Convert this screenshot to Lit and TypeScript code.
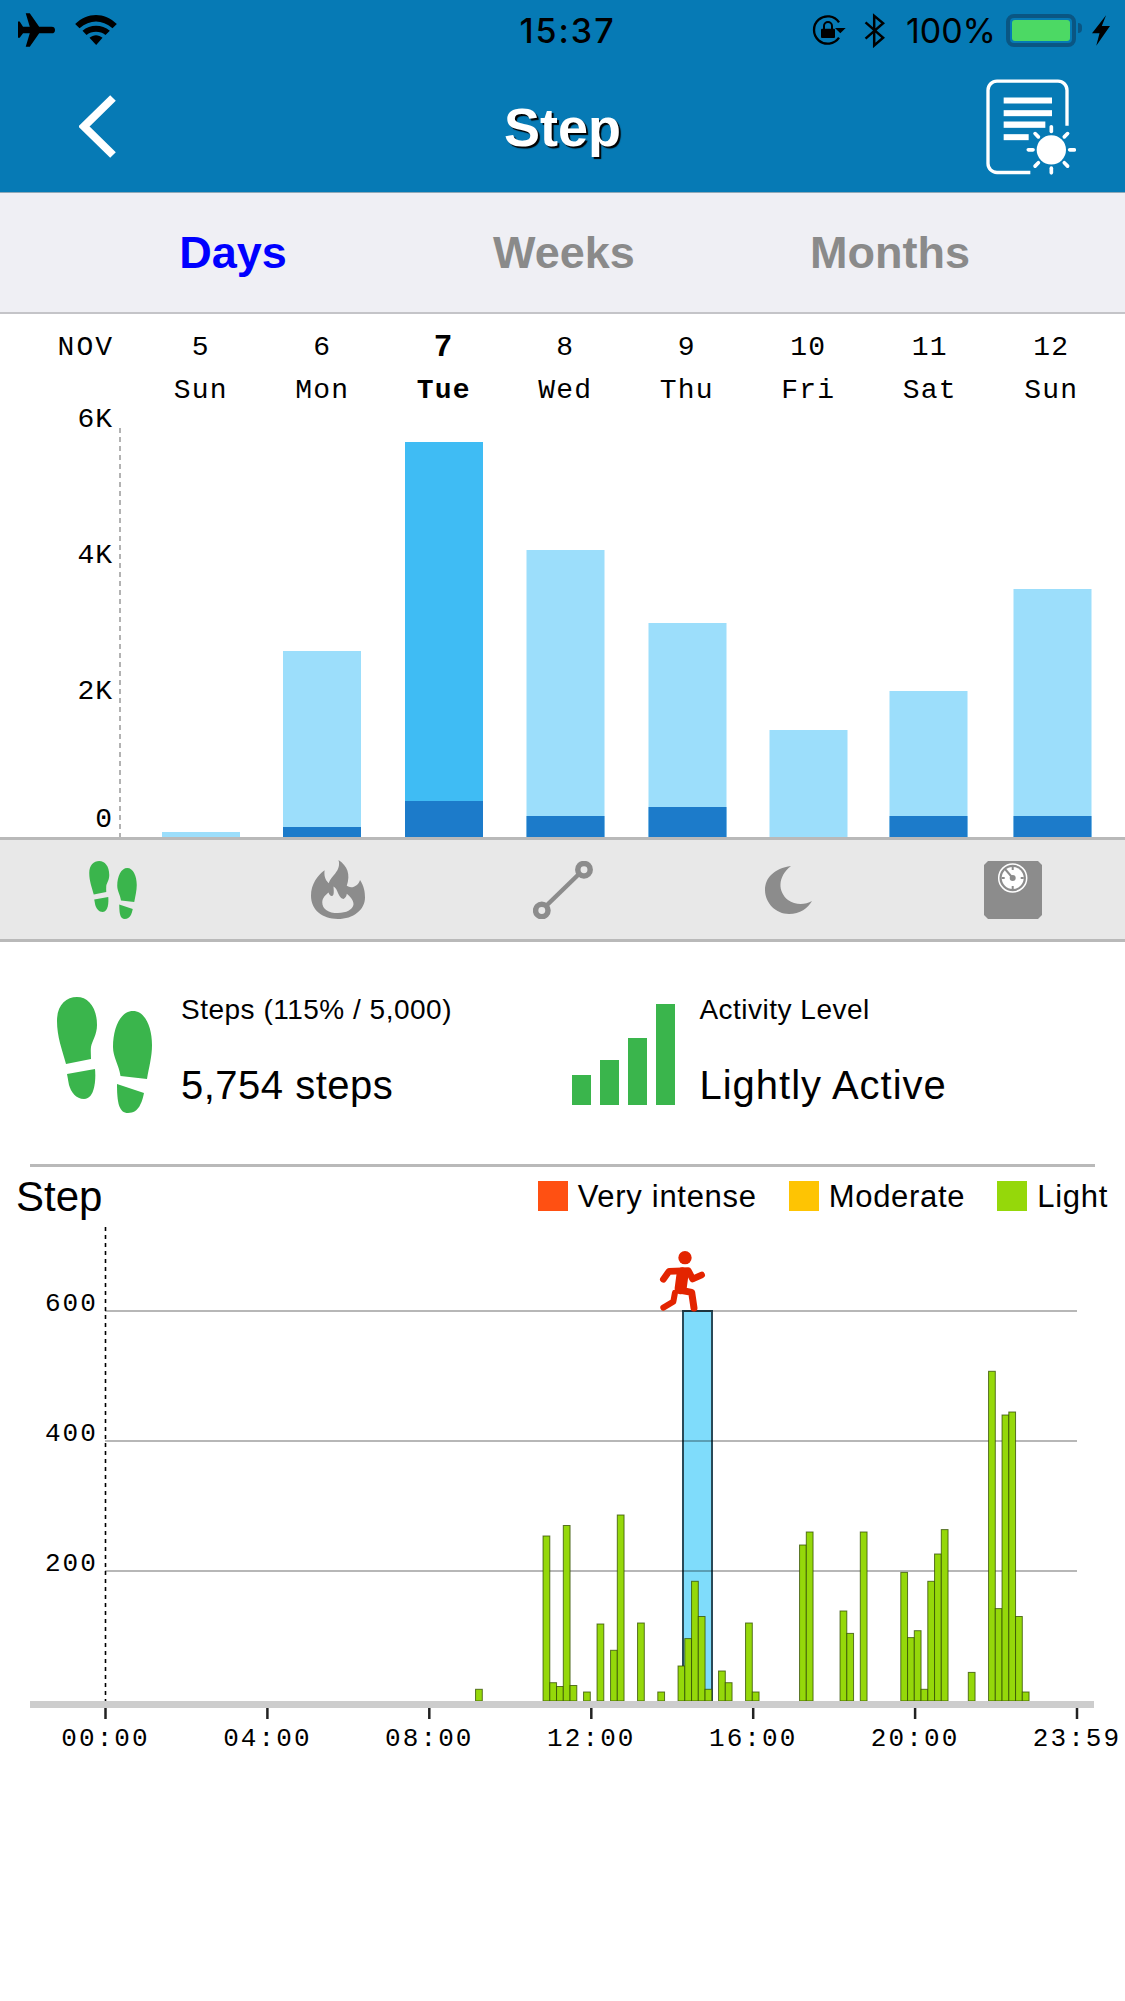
import { LitElement, html, svg, css } from 'lit';
import { customElement } from 'lit/decorators.js';

const DAYS = [
  { d: '5', w: 'Sun' }, { d: '6', w: 'Mon' }, { d: '7', w: 'Tue', today: true }, { d: '8', w: 'Wed' },
  { d: '9', w: 'Thu' }, { d: '10', w: 'Fri' }, { d: '11', w: 'Sat' }, { d: '12', w: 'Sun' },
];

// left edge, top, top of the dark part (0 = none)
const WEEK_BARS = [
  [162, 832, 0], [283, 651, 827], [405, 442, 801], [526.5, 550, 816],
  [648.5, 623, 807], [769.5, 730, 0], [889.5, 691, 816], [1013.5, 589, 816],
];

// 10 minute slot, height in px
const STEP_BARS = [
  [55, 11.7], [65, 165], [66, 18.3], [67, 14.5], [68, 175.5], [69, 15.5], [71, 9], [73, 77], [75, 50.7], [76, 186],
  [79, 78], [82, 9], [85, 35], [86, 62.4], [87, 119.7], [88, 84.5], [89, 11.7], [91, 30], [92, 18.3], [95, 78], [96, 9],
  [103, 156], [104, 169], [109, 90], [110, 67.6], [112, 169], [118, 128.6], [119, 63.4], [120, 70.3], [121, 11.7],
  [122, 119.7], [123, 147], [124, 171.4], [128, 28.6], [131, 329.7], [132, 92.4], [133, 286], [134, 289], [135, 84.5], [136, 9],
];

const TICKS = [
  [105.5, '00:00'], [267.4, '04:00'], [429.3, '08:00'], [591.3, '12:00'],
  [753.2, '16:00'], [915.1, '20:00'], [1077, '23:59'],
];

const feet = (cls: string) => html`<svg class=${cls} viewBox="0 0 95 116" fill="#3ab54c">
  <path d="M20,0 C31,0 40,10 40,28 C40,38 35,44 34,50 C33.5,54 34,58 34,62 L9,67 C5,52 0,40 0,24 C0,8 9,0 20,0 Z" />
  <path d="M10,77 L38,72 C39,82 38,102 27,102 C19,102 14,95 12,88 Z" />
  <path d="M76,14 C88,14 95,30 95,48 C95,60 92,70 90,82 L63.5,79 C62,68 56,60 56,50 C56,30 64,14 76,14 Z" />
  <path d="M60,87 L87,96 C85,105 82,116 71,116 C62,116 60,106 60,87 Z" />
</svg>`;

@customElement('app-root')
export class AppRoot extends LitElement {
  static styles = css`
    :host {
      display: block;
      width: 1125px;
      min-height: 2001px;
      background: #fff;
      font-family: 'Liberation Sans', Arial, sans-serif;
      color: #000;
      overflow: hidden;
    }
    svg { display: block; }

    .top {
      height: 192px;
      background: #067ab5;
      border-bottom: 1px solid #8fa9b8;
    }
    .status {
      height: 60px;
      display: grid;
      grid-template-columns: 1fr auto 1fr;
      align-items: center;
      font-family: Inter, 'Liberation Sans', sans-serif;
    }
    .status-left { display: flex; align-items: center; gap: 20px; padding-left: 18px; }
    .status-right { display: flex; align-items: center; justify-content: flex-end; padding-right: 15px; }
    .time { font-size: 34px; font-weight: 500; letter-spacing: 2px; margin-left: 10px; }
    .pct { font-size: 34px; margin: 0 10px 0 21px; }
    .plane { width: 37px; height: 34px; }
    .wifi { width: 42px; height: 30px; }
    .rot { width: 34px; height: 30px; margin-right: 18px; }
    .bt { width: 21px; height: 35px; }
    .battery {
      width: 70px;
      height: 33px;
      box-sizing: border-box;
      border: 4px solid #0a5683;
      border-radius: 8px;
      padding: 2px;
      position: relative;
      background: #067ab5;
    }
    .battery i { display: block; height: 100%; background: #4cd964; border-radius: 3px; }
    .battery::after {
      content: '';
      position: absolute;
      left: 68px;
      top: 5px;
      width: 4px;
      height: 10px;
      background: #0a5683;
      border-radius: 0 4px 4px 0;
    }
    .bolt { width: 18px; height: 31px; margin-left: 16px; }

    .nav {
      height: 132px;
      display: grid;
      grid-template-columns: 1fr auto 1fr;
      align-items: center;
    }
    .back { width: 37px; height: 63px; margin-left: 79px; }
    .title {
      font-size: 54px;
      font-weight: bold;
      color: #fff;
      text-shadow: 2px 2px 1px #000;
      margin-top: 2px;
    }
    .report { width: 90px; height: 97px; justify-self: end; margin-right: 49px; margin-top: 2px; }

    .tabs {
      height: 119px;
      background: #efeff4;
      border-bottom: 2px solid #c4c4c8;
      display: grid;
      grid-template-columns: 328px 334px 318px;
      padding-left: 69px;
      align-items: center;
      text-align: center;
      font-size: 45px;
      font-weight: bold;
      color: #8a8a8a;
    }
    .tabs .on { color: #0000ff; }

    .dates {
      height: 100px;
      box-sizing: border-box;
      padding-top: 12px;
      display: grid;
      grid-template-columns: 140px repeat(8, 121.5px);
      grid-template-rows: 43px 43px;
      align-items: center;
      text-align: center;
      font-family: 'Liberation Mono', 'Courier New', monospace;
      font-size: 28px;
      letter-spacing: 1.2px;
    }
    .dates .month { text-align: right; padding-right: 26px; letter-spacing: 2px; }
    .dates .today { font-weight: bold; }
    .dates .big { font-size: 31px; }
    .dates .blank { grid-row: 2; }

    .week-chart { width: 1125px; height: 423px; overflow: visible; }
    .axis { font-family: 'Liberation Mono', 'Courier New', monospace; font-size: 28px; letter-spacing: 1px; }
    .axis-wide { font-family: 'Liberation Mono', 'Courier New', monospace; font-size: 26px; letter-spacing: 2.1px; }

    .icons {
      height: 99px;
      background: #e8e8e8;
      border-top: 3px solid #b9b9b9;
      border-bottom: 3px solid #b9b9b9;
      display: grid;
      grid-template-columns: repeat(5, 225px);
      justify-items: center;
      align-items: center;
    }
    .foot-sm { width: 48px; height: 58px; }
    .flame { width: 54px; height: 59px; }
    .line { width: 60px; height: 58px; }
    .moon { width: 47px; height: 49px; margin-left: 2px; }
    .scale { width: 58px; height: 58px; }

    .stats {
      height: 222px;
      box-sizing: border-box;
      padding: 53px 0 0 57px;
      display: grid;
      grid-template-columns: 514.5px 1fr;
    }
    .stat { display: flex; align-items: flex-start; }
    .foot-lg { width: 95px; height: 116px; margin: 2px 29px 0 0; }
    .levels {
      display: flex;
      align-items: flex-end;
      gap: 9.3px;
      height: 101px;
      margin: 9px 24px 0 0;
    }
    .levels i { display: block; width: 19px; background: #3ab54c; }
    .stat-label { font-size: 28px; line-height: 30px; letter-spacing: 0.5px; }
    .stat-value { font-size: 40px; line-height: 50px; margin-top: 35px; letter-spacing: 0.5px; }
    .stat-value.wide { letter-spacing: 1px; }

    .rule { height: 3px; background: #b9b9b9; margin: 0 30px; }

    .chart-head {
      height: 60px;
      display: flex;
      align-items: center;
      justify-content: space-between;
      padding: 0 17px 0 16px;
    }
    .chart-title { font-size: 42px; }
    .legend { display: flex; gap: 32px; font-size: 31px; letter-spacing: 0.7px; line-height: 32px; }
    .legend span { display: flex; align-items: center; gap: 10px; }
    .legend i { display: block; width: 30px; height: 30px; margin-top: -2px; }
    .red { background: #ff5012; }
    .amber { background: #fec403; }
    .green { background: #95d80a; }
    .day-chart { width: 1125px; height: 540px; }
  `;

  render() {
    return html`
      ${this.renderTop()}
      <div class="tabs"><div class="on">Days</div><div>Weeks</div><div>Months</div></div>
      <div class="dates">
        <div class="month">NOV</div>
        ${DAYS.map(x => html`<div class="${x.today ? 'today big' : ''}">${x.d}</div>`)}
        <div class="blank"></div>
        ${DAYS.map(x => html`<div class="${x.today ? 'today' : ''}">${x.w}</div>`)}
      </div>
      ${this.renderWeekChart()}
      ${this.renderIcons()}
      <div class="stats">
        <div class="stat">
          ${feet('foot-lg')}
          <div>
            <div class="stat-label">Steps (115% / 5,000)</div>
            <div class="stat-value">5,754 steps</div>
          </div>
        </div>
        <div class="stat">
          <div class="levels">
            ${[30, 45, 67, 101].map(h => html`<i style="height:${h}px"></i>`)}
          </div>
          <div>
            <div class="stat-label">Activity Level</div>
            <div class="stat-value wide">Lightly Active</div>
          </div>
        </div>
      </div>
      <div class="rule"></div>
      <div class="chart-head">
        <div class="chart-title">Step</div>
        <div class="legend">
          <span><i class="red"></i>Very intense</span>
          <span><i class="amber"></i>Moderate</span>
          <span><i class="green"></i>Light</span>
        </div>
      </div>
      ${this.renderDayChart()}
    `;
  }

  renderTop() {
    const rays = [0, 45, 90, 135, 180, 225, 270, 315];
    return html`<div class="top">
      <div class="status">
        <div class="status-left">
          <svg class="plane" viewBox="55 40 110 100">
            <path d="M78,40 L90,40 L118,80 L155,80 Q165,80 165,90 Q165,100 155,100 L118,100 L90,140 L78,140 L90,100 L70,100 L60,113 L55,113 L55,65 L60,65 L70,80 L90,80 Z" />
          </svg>
          <svg class="wifi" viewBox="225 45 125 90">
            <path d="M225,72 C262,36 313,36 350,72 L337,85 C305,58 270,58 238,85 Z" />
            <path d="M247,92 C270,72 305,72 329,92 L316,105 C300,92 275,92 259,105 Z" />
            <path d="M268,113 C280,103 295,103 307,113 L288,135 Z" />
          </svg>
        </div>
        <div class="time">15:37</div>
        <div class="status-right">
          <svg class="rot" viewBox="95 45 102 90">
            <path d="M176,113 A41,41 0 1 1 176,67" fill="none" stroke="#000" stroke-width="7" />
            <path d="M164,84 L196,84 L180,100 Z" />
            <rect x="122" y="86" width="42" height="28" rx="3" />
            <path d="M131,88 V78 A12,12 0 0 1 155,78 V88" fill="none" stroke="#000" stroke-width="6" />
          </svg>
          <svg class="bt" viewBox="250 38 68 107">
            <path d="M255,65 L312,115 L283,140 L283,44 L312,68 L255,118" fill="none" stroke="#000" stroke-width="8" />
          </svg>
          <span class="pct">100%</span>
          <div class="battery"><i></i></div>
          <svg class="bolt" viewBox="935 45 55 93">
            <path d="M978,45 L935,100 L958,100 L948,138 L990,78 L965,78 Z" />
          </svg>
        </div>
      </div>
      <div class="nav">
        <svg class="back" viewBox="79 95 37 63">
          <path d="M113,98 L84,126.5 L113,155" fill="none" stroke="#fff" stroke-width="8" />
        </svg>
        <div class="title">Step</div>
        <svg class="report" viewBox="617 235 270 290">
          <path d="M860,375 V268 A27,27 0 0 0 833,241 H650 A27,27 0 0 0 623,268 V488 A27,27 0 0 0 650,515 H750" fill="none" stroke="#fff" stroke-width="10" />
          <g fill="#fff">
            <rect x="670" y="290" width="145" height="18" />
            <rect x="670" y="328" width="145" height="18" />
            <rect x="670" y="362" width="125" height="19" />
            <rect x="670" y="400" width="75" height="18" />
            <circle cx="813" cy="447" r="44" />
          </g>
          ${rays.map(a => svg`<path d="M868,447 H882" transform="rotate(${a} 813 447)" stroke="#fff" stroke-width="11" stroke-linecap="round" />`)}
        </svg>
      </div>
    </div>`;
  }

  renderWeekChart() {
    return html`<svg class="week-chart" viewBox="0 414 1125 423">
      <line x1="120" y1="428" x2="120" y2="837" stroke="#999" stroke-width="1.5" stroke-dasharray="5 4" />
      ${[['6K', 427], ['4K', 563], ['2K', 699], ['0', 827]].map(([t, y]) =>
        svg`<text class="axis" x="113" y=${y} text-anchor="end">${t}</text>`)}
      ${WEEK_BARS.map(([x, top, dark], i) => svg`
        <rect x=${x} y=${top} width="78" height=${837 - top} fill=${i == 2 ? '#3fbcf4' : '#9cdefb'} />
        ${dark ? svg`<rect x=${x} y=${dark} width="78" height=${837 - dark} fill="#1c7bca" />` : ''}
      `)}
    </svg>`;
  }

  renderIcons() {
    const grey = '#8c8c8c';
    const ticks = [0, 90, 180, 270];
    return html`<div class="icons">
      ${feet('foot-sm')}
      <svg class="flame" viewBox="752 62 163 178" fill=${grey} fill-rule="evenodd">
        <path d="M833,240 C785,240 752,212 752,170 C752,135 772,108 793,93 C790,115 800,128 806,132 C810,112 845,95 835,62 C862,80 872,105 860,140 C875,150 895,140 900,122 C912,140 915,158 915,175 C915,212 880,240 833,240 Z
                 M786,190 C786,175 798,166 805,160 C808,170 816,175 820,165 C822,156 820,150 820,142 C835,150 832,175 850,180 C856,176 860,170 860,164 C875,175 882,190 880,198 C876,212 860,222 833,222 C805,222 786,210 786,190 Z" />
      </svg>
      <svg class="line" viewBox="0 0 60 58" fill="none" stroke=${grey}>
        <line x1="13" y1="45" x2="46" y2="13" stroke-width="4.5" />
        <circle cx="51" cy="8.7" r="6.2" stroke-width="5.5" />
        <circle cx="8.8" cy="49.5" r="6.2" stroke-width="5.5" />
      </svg>
      <svg class="moon" viewBox="0 0 47 49" fill=${grey}>
        <path d="M26,1 C9,3.5 0,13 0,25 C0,38 11,49 24,49 C35,49 43,43 47,36 C40,40 30,40 23,35 C13,27 12,12 26,1 Z" />
      </svg>
      <svg class="scale" viewBox="0 0 58 58">
        <path d="M4,0 H54 L58,4 V54 L54,58 H4 L0,54 V4 Z" fill=${grey} />
        <circle cx="28.7" cy="17" r="14" fill="none" stroke="#fff" stroke-width="1.5" />
        <circle cx="28.7" cy="17" r="11" fill="#fff" />
        ${ticks.map(a => svg`<path d="M28.7,6 V9" stroke=${grey} stroke-width="2" transform="rotate(${a} 28.7 17)" />`)}
        <path d="M21,8 L28.7,17" stroke=${grey} stroke-width="2" />
        <circle cx="28.7" cy="17" r="3" fill=${grey} />
      </svg>
    </div>`;
  }

  renderDayChart() {
    return html`<svg class="day-chart" viewBox="0 1227 1125 540">
      <rect x="683" y="1311" width="29" height="390" fill="#7fdcfb" stroke="#2a4a58" stroke-width="2" />
      ${[1311, 1441, 1571].map(y => svg`<line x1="105" y1=${y} x2="1077" y2=${y} stroke="#000" stroke-opacity=".38" stroke-width="1.6" />`)}
      ${[['600', 1311], ['400', 1441], ['200', 1571]].map(([t, y]) =>
        svg`<text class="axis-wide" x="98" y=${y as number} text-anchor="end">${t}</text>`)}
      <line x1="105.5" y1="1227" x2="105.5" y2="1701" stroke="#000" stroke-width="1.6" stroke-dasharray="4 4" />
      ${STEP_BARS.map(([n, h]) => svg`<rect x=${104.3 + n * 6.75} y=${1701 - h} width="6.75" height=${h} fill="#95d80a" stroke="#2f4a00" stroke-opacity=".75" stroke-width="1" />`)}
      <rect x="30" y="1701" width="1064" height="7" fill="#cdcdcd" />
      ${TICKS.map(([x, t]) => svg`
        <line x1=${x} y1="1708" x2=${x} y2="1719" stroke="#222" stroke-width="2.5" />
        <text class="axis-wide" x=${x} y="1746" text-anchor="middle">${t}</text>
      `)}
      <g transform="translate(620 1240) scale(.3333)" fill="none" stroke="#e32400" stroke-linecap="round" stroke-linejoin="round">
        <circle cx="195" cy="53" r="20" fill="#e32400" stroke="none" />
        <path d="M130,118 L147,94 L205,92 L218,117 L245,105" stroke-width="20" />
        <path d="M188,100 L182,145" stroke-width="36" />
        <path d="M178,150 L215,157 L222,204" stroke-width="21" />
        <path d="M165,158 L160,185 L130,203" stroke-width="18" />
      </g>
    </svg>`;
  }
}
